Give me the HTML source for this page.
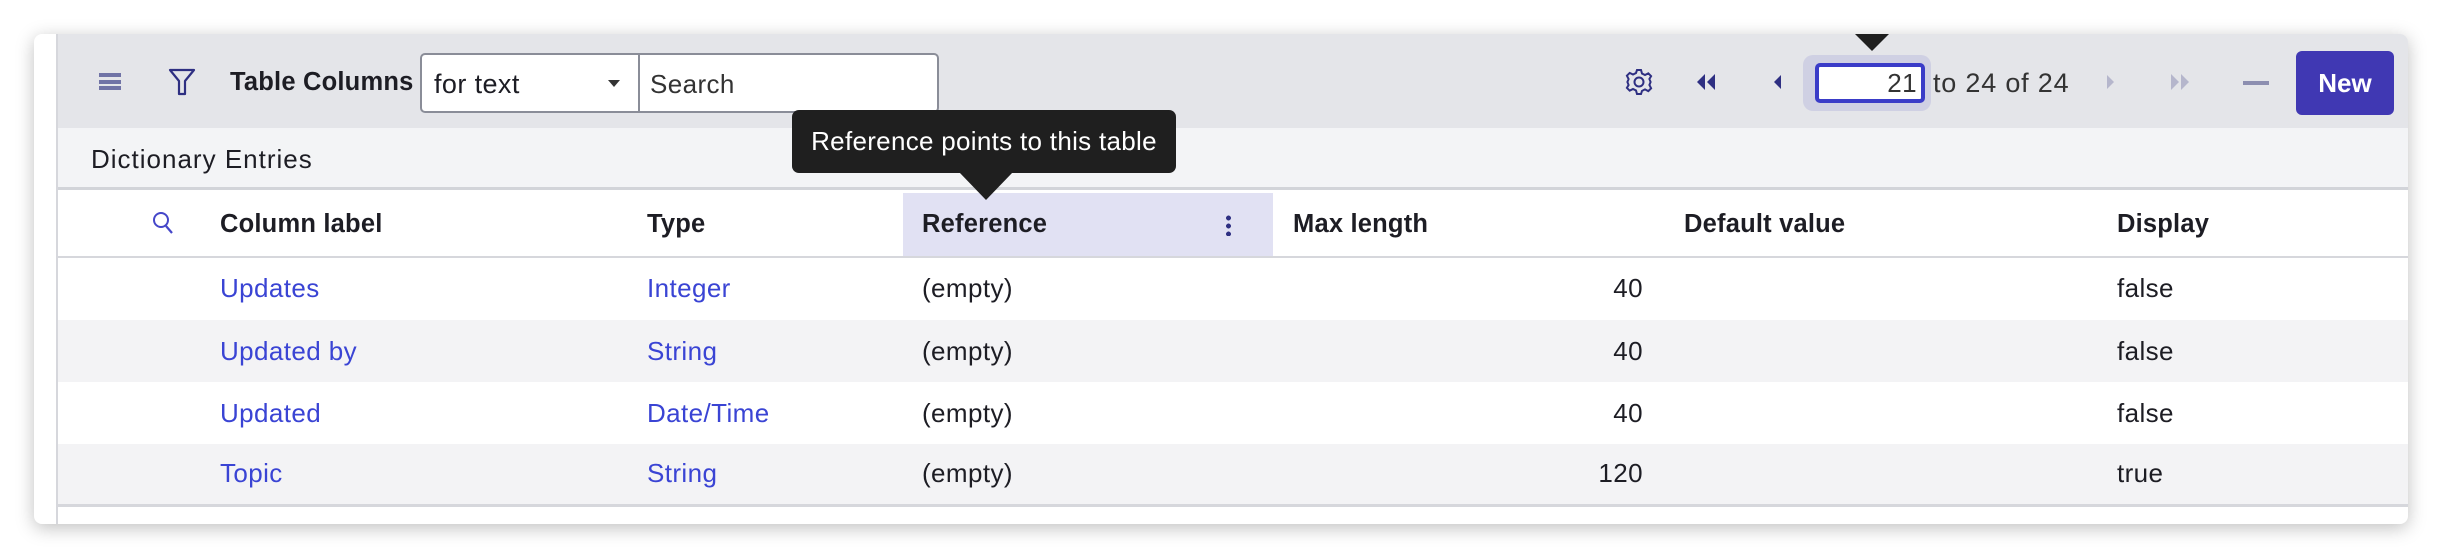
<!DOCTYPE html>
<html><head><meta charset="utf-8"><style>
*{box-sizing:border-box;margin:0;padding:0}
body{width:2444px;height:558px;background:#fff;font-family:"Liberation Sans",sans-serif;position:relative;overflow:hidden;color:#1d1d24}
.card{position:absolute;left:34px;top:34px;width:2374px;height:490px;background:#fff;border-radius:8px;box-shadow:0 4px 18px rgba(0,0,0,.25);overflow:hidden}
.inner{position:absolute;left:22px;top:0;right:0;bottom:0;border-left:2px solid #d6d7dc}
.tb{position:absolute;left:0;top:0;right:0;height:94px;background:#e4e5e9}
.band{position:absolute;left:0;top:94px;right:0;height:62px;background:#f3f4f6;border-bottom:3px solid #d2d4d9}
.abs{position:absolute}
.t{font-size:26px;white-space:nowrap;letter-spacing:0.4px}
.b{font-weight:bold;font-size:25.5px;letter-spacing:0.2px}
.link{color:#3a44d4}
.row{position:absolute;left:0;right:0;height:62px}
</style></head><body>
<div class="card"><div class="inner">
<div class="tb"></div>
<div class="band"></div>
<!-- hamburger -->
<div class="abs" style="left:41px;top:39px;width:22px;height:4px;background:#7073a6"></div>
<div class="abs" style="left:41px;top:45.5px;width:22px;height:4px;background:#7073a6"></div>
<div class="abs" style="left:41px;top:52px;width:22px;height:4px;background:#7073a6"></div>
<svg class="abs" style="left:110px;top:33px" width="28" height="30" viewBox="0 0 28 30"><path d="M2 3h24l-9 11v13h-6V14z" fill="none" stroke="#2e2f82" stroke-width="2.2" stroke-linejoin="round"/></svg>
<div class="abs t b" style="left:172px;top:34px">Table Columns</div>
<div class="abs" style="left:362px;top:19px;width:519px;height:60px;border:2px solid #8a8d98;border-radius:5px;background:#fff"></div>
<div class="abs" style="left:580px;top:19px;width:2px;height:60px;background:#8a8d98"></div>
<div class="abs t" style="left:376px;top:35px;font-size:27px">for text</div>
<div class="abs" style="left:550px;top:46px;width:0;height:0;border-left:6px solid transparent;border-right:6px solid transparent;border-top:7px solid #333"></div>
<div class="abs t" style="left:592px;top:35px;color:#333">Search</div>
<!-- gear -->
<svg class="abs" style="left:1566px;top:33px" width="30" height="30" viewBox="0 0 30 30"><path d="M13 3h4l1 3.5 3 1.5 3.3-1.7 2.8 2.8L25.4 12l1.2 3-1.2 3 1.7 3.3-2.8 2.8-3.3-1.7-3 1.5L17 27h-4l-1-3.5-3-1.5-3.3 1.7-2.8-2.8L4.6 18l-1.2-3 1.2-3-1.7-3.3 2.8-2.8L9 7.5l3-1.5z" fill="none" stroke="#2e2f82" stroke-width="2"/><circle cx="15" cy="15" r="4.5" fill="none" stroke="#2e2f82" stroke-width="2"/></svg>
<svg class="abs" style="left:1636px;top:36px" width="24" height="24" viewBox="0 0 24 24"><path d="M11 4L3 12l8 8zM21 4l-8 8 8 8z" fill="#2e2f82"/></svg>
<svg class="abs" style="left:1713px;top:36px" width="14" height="24" viewBox="0 0 14 24"><path d="M10 5L3 12l7 7z" fill="#2e2f82"/></svg>
<div class="abs" style="left:1745px;top:21px;width:128px;height:56px;border-radius:10px;background:#cfd0e3"></div>
<div class="abs" style="left:1757px;top:29px;width:110px;height:40px;border:4px solid #3a3cc8;border-radius:5px;background:#fff"></div>
<div class="abs t" style="left:1757px;top:34px;width:102px;text-align:right;color:#333">21</div>
<div class="abs t" style="left:1875px;top:34px;color:#333;font-size:27px;letter-spacing:0.8px">to 24 of 24</div>
<svg class="abs" style="left:2045px;top:36px" width="14" height="24" viewBox="0 0 14 24"><path d="M4 5l7 7-7 7z" fill="#b5b6cc"/></svg>
<svg class="abs" style="left:2110px;top:36px" width="24" height="24" viewBox="0 0 24 24"><path d="M3 4l8 8-8 8zM13 4l8 8-8 8z" fill="#b5b6cc"/></svg>
<div class="abs" style="left:2185px;top:47px;width:26px;height:4px;background:#8c8eb0"></div>
<div class="abs" style="left:2238px;top:17px;width:98px;height:64px;background:#4038b3;border-radius:6px;color:#fff;font-weight:bold;font-size:26px;text-align:center;line-height:64px">New</div>
<div class="abs" style="left:1797px;top:0;width:0;height:0;border-left:17px solid transparent;border-right:17px solid transparent;border-top:17px solid #1f1f1f"></div>
<div class="abs t" style="left:33px;top:110px;font-size:26px;letter-spacing:1px">Dictionary Entries</div>
<!-- header -->
<div class="abs" style="left:845px;top:159px;width:370px;height:63px;background:#e1e1f3"></div>
<svg class="abs" style="left:93px;top:176px" width="24" height="26" viewBox="0 0 24 26"><circle cx="10" cy="10" r="7" fill="none" stroke="#4547c9" stroke-width="2"/><path d="M15 16l6 7" stroke="#4547c9" stroke-width="2.2"/></svg>
<div class="abs t b" style="left:162px;top:176px">Column label</div>
<div class="abs t b" style="left:589px;top:176px">Type</div>
<div class="abs t b" style="left:864px;top:176px">Reference</div>
<div class="abs" style="left:1168px;top:180px;width:5px;height:22px;background:radial-gradient(circle,#2e2f82 2.3px,transparent 2.6px) 0 0/5px 8px"></div>
<div class="abs t b" style="left:1235px;top:176px">Max length</div>
<div class="abs t b" style="left:1626px;top:176px">Default value</div>
<div class="abs t b" style="left:2059px;top:176px">Display</div>
<div class="abs" style="left:0;right:0;top:222px;height:2px;background:#d6d7dc"></div>
<div class="row" style="top:224px;background:#fff"></div>
<div class="row" style="top:286px;background:#f3f3f5"></div>
<div class="row" style="top:348px;background:#fff"></div>
<div class="row" style="top:410px;background:#f3f3f5"></div>
<div class="abs" style="left:0;right:0;top:470px;height:3px;background:#d6d7dc"></div>
<div class="abs t link" style="left:162px;top:239px">Updates</div>
<div class="abs t link" style="left:589px;top:239px">Integer</div>
<div class="abs t" style="left:864px;top:239px">(empty)</div>
<div class="abs t" style="left:1385px;top:239px;width:200px;text-align:right">40</div>
<div class="abs t" style="left:2059px;top:239px">false</div>
<div class="abs t link" style="left:162px;top:302px">Updated by</div>
<div class="abs t link" style="left:589px;top:302px">String</div>
<div class="abs t" style="left:864px;top:302px">(empty)</div>
<div class="abs t" style="left:1385px;top:302px;width:200px;text-align:right">40</div>
<div class="abs t" style="left:2059px;top:302px">false</div>
<div class="abs t link" style="left:162px;top:364px">Updated</div>
<div class="abs t link" style="left:589px;top:364px">Date/Time</div>
<div class="abs t" style="left:864px;top:364px">(empty)</div>
<div class="abs t" style="left:1385px;top:364px;width:200px;text-align:right">40</div>
<div class="abs t" style="left:2059px;top:364px">false</div>
<div class="abs t link" style="left:162px;top:424px">Topic</div>
<div class="abs t link" style="left:589px;top:424px">String</div>
<div class="abs t" style="left:864px;top:424px">(empty)</div>
<div class="abs t" style="left:1385px;top:424px;width:200px;text-align:right">120</div>
<div class="abs t" style="left:2059px;top:424px">true</div>
</div></div>
<!-- tooltip -->
<div class="abs" style="left:792px;top:110px;width:384px;height:63px;background:#1f1f1f;border-radius:7px;color:#fff;font-size:26px;letter-spacing:0.3px;line-height:63px;text-align:center;white-space:nowrap">Reference points to this table</div>
<div class="abs" style="left:959px;top:172px;width:0;height:0;border-left:27px solid transparent;border-right:27px solid transparent;border-top:28px solid #1f1f1f"></div>
</body></html>
